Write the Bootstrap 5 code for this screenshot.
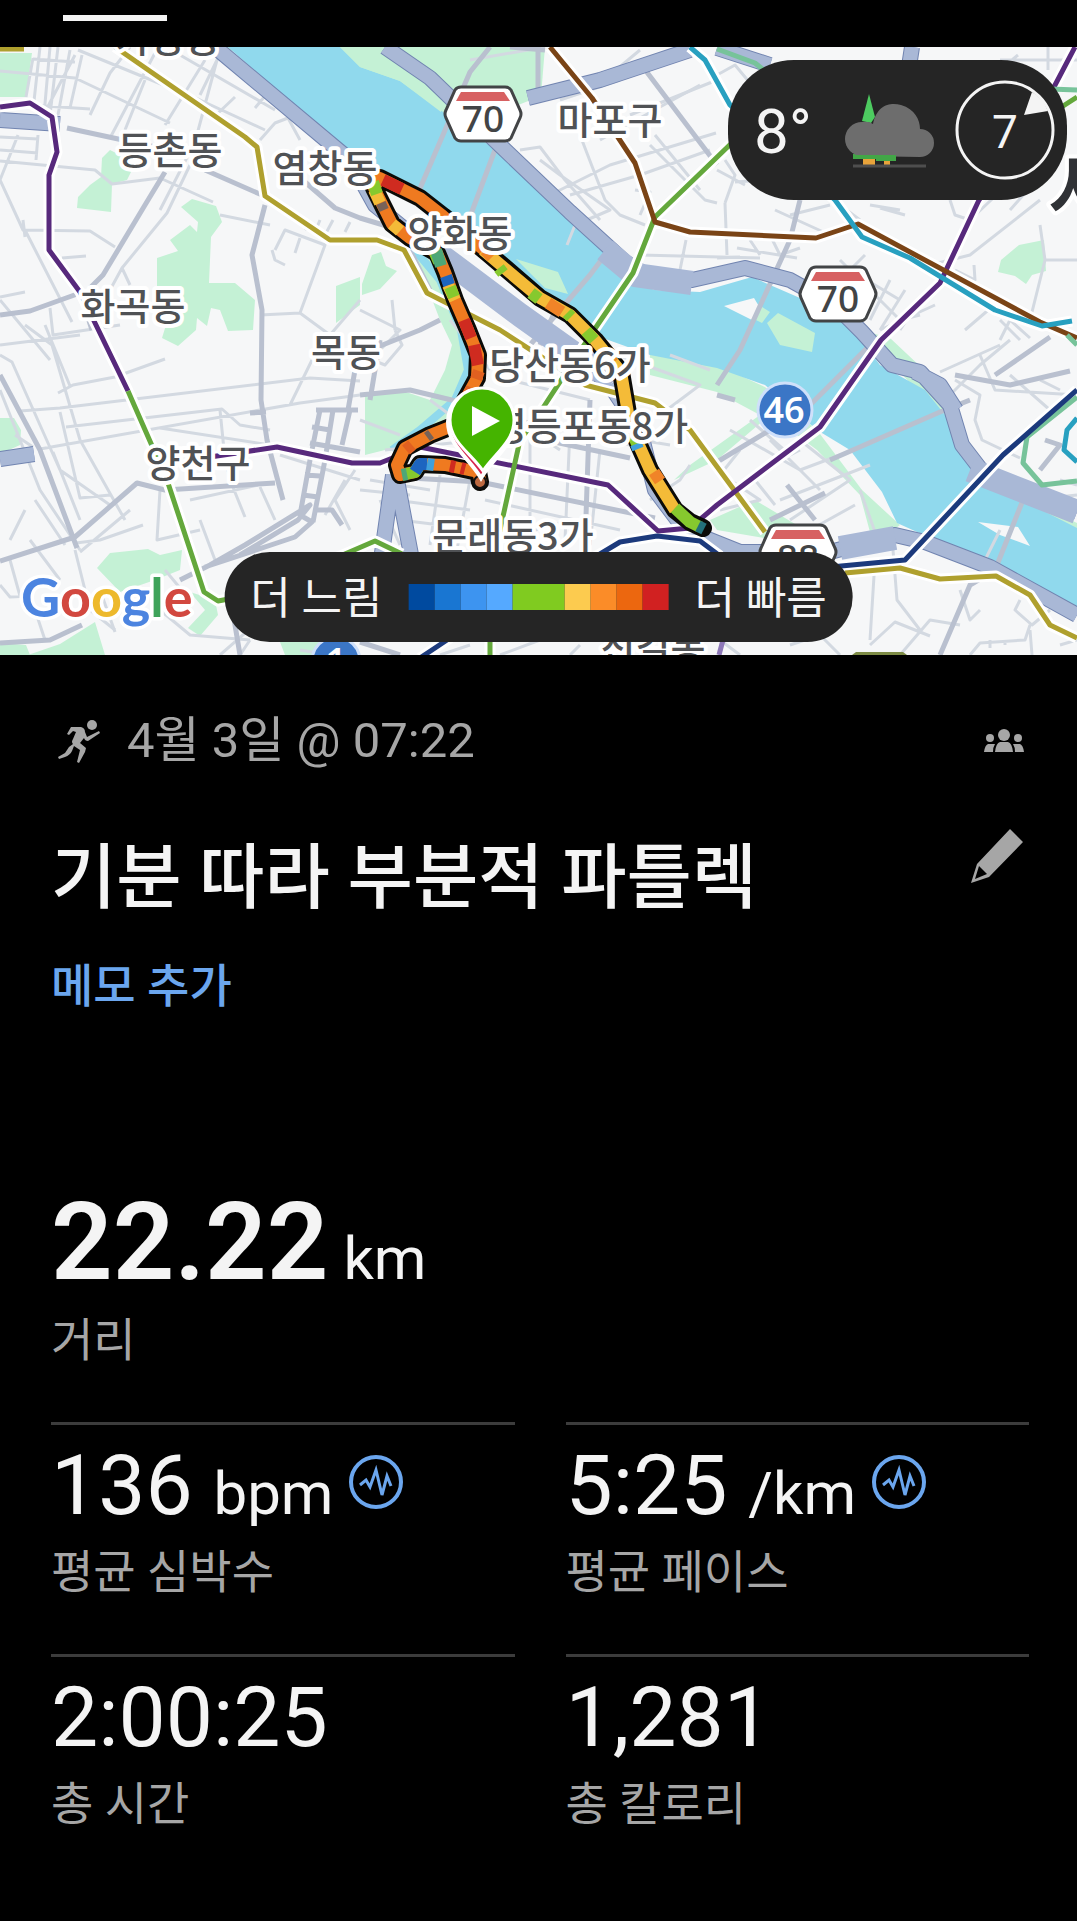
<!DOCTYPE html>
<html lang="ko" data-bs-theme="dark">
<head>
<meta charset="utf-8">
<meta name="viewport" content="width=device-width, initial-scale=1">
<title>기분 따라 부분적 파틀렉</title>
<link href="https://cdn.jsdelivr.net/npm/bootstrap@5.3.0/dist/css/bootstrap.min.css" rel="stylesheet">
<style>
  body { background: #000; color: #f4f4f4; font-family: Roboto, "Noto Sans CJK KR", sans-serif; }
  .tabs-bar { height: 47px; padding: 15px 63px 0; }
  .tab-line { width: 104px; height: 6px; background: #f4f4f4; }
  .map-art { display: block; width: 100%; height: auto; }
  .weather { top: 13px; right: 10px; width: 339px; height: 140px; border-radius: 66px; background: #252525; padding: 4px 12px 0 26px; }
  .temp { font-size: 62px; line-height: 70px; }
  .sky { margin-left: 12px; }
  .legend-bar { bottom: 13px; height: 90px; border-radius: 45px; background: #252525; padding: 4px 26px 0; gap: 26px; font-size: 44px; line-height: 60px; }
  .pace-scale { margin-bottom: 4px; }
  .pace-scale i { width: 26px; height: 26px; }
  .pace-scale .mid-pace { width: 52px; }
  .details { padding: 51px 48px 80px 51px; }
  .muted-text { color: #a6a6a6; }
  .date-row { height: 70px; font-size: 49px; line-height: 70px; }
  .run-title { font-size: 71px; line-height: 100px; font-weight: 500; margin: 0; color: #f4f4f4; }
  .title-row { margin-top: 52px; }
  .memo { display: inline-block; font-size: 46px; line-height: 60px; font-weight: 500; color: #6ba6ee; margin-top: 28px; }
  .distance { margin-top: 171px; margin-bottom: 52px; }
  .big-num { font-size: 108px; line-height: 110px; font-weight: 600; }
  .num { font-size: 84px; line-height: 90px; }
  .unit { font-size: 60px; line-height: 60px; font-weight: 400; }
  .stat-name { font-size: 46px; line-height: 60px; color: #a6a6a6; margin-top: 11px; }
  .distance .stat-name { margin-top: 13px; }
  .stat-grid { --bs-gutter-x: 51px; --bs-gutter-y: 52px; }
  .stat-box { border-top: 3px solid #3c3c3c; padding-top: 16px; }
  .icon-btn { background: none; border: 0; padding: 0; line-height: 0; }
  .places { font: 500 38px "Noto Sans CJK KR", sans-serif; fill: #505255; stroke: #fff; stroke-width: 8; stroke-linejoin: round; paint-order: stroke; text-anchor: middle; }
  .logo-text { font: 700 54px Lato, sans-serif; stroke: #fff; stroke-width: 7; stroke-linejoin: round; paint-order: stroke; }
  .shield-no { font: 500 37px "Noto Sans", "Open Sans", sans-serif; fill: #424446; text-anchor: middle; }
  .line { fill: none; stroke-linejoin: round; }
</style>
</head>
<body>
<header class="tabs-bar"><div class="tab-line"></div></header>

<section class="position-relative overflow-hidden" aria-label="지도">
<svg class="map-art" viewBox="0 47 1077 608" role="img" aria-label="달리기 경로">
  <rect y="47" width="1077" height="608" fill="#f6f7f8"/>
  <!-- parks -->
  <g fill="#c4f1d5">
    <path d="M0 53L32 53L26 97L0 97ZM110 150L120 155L131 172L127 180L112 184L111 212L77 208L78 197L90 185L101 177L102 158ZM192 199L216 206L222 222L211 237L209 283L235 283L255 300L253 330L228 331L220 310L211 308L207 326L197 318L196 330L178 346L162 338L166 325L157 320L157 258L178 251L170 240L190 225L197 232L198 222L181 207ZM336 286L360 277L360 305L336 323ZM0 418L14 418L21 430L20 445L0 454ZM97 568L110 553L148 549L160 555L182 550L180 570L155 580L120 592ZM190 592L215 600L218 615L200 636L188 628L205 610ZM28 655L60 644L95 622L105 655ZM0 643L26 645L30 655H0ZM280 642H320V655H285Z"/>
    <path d="M362 284L372 255L381 252L386 266L397 271L380 289L362 295ZM410 242L440 254L470 330L468 400L420 440L385 450L365 455V395L400 390L430 400L445 370L452 345L440 320Z"/>
    <path d="M1001 260L1019 245L1044 240L1046 271L1032 275L1026 284L1015 276L998 272ZM650 352L717 365L765 387L817 430L862 490L900 525L880 540L805 545L717 530L710 520L755 500L830 545L870 532L860 495L817 450L770 415L717 460L674 480L690 465L760 415L717 392L650 375Z"/>
    <path d="M220 47H545L541 96L500 112L440 112Z"/>
    <path d="M860 330L890 338L940 385L960 430L975 475L1077 523V530L1000 500L960 480L945 420Z"/>
  </g>
  <!-- Han river -->
  <path fill="#90d9ed" d="M228 47H340L360 67L400 81L443 112L500 153L560 205L607 255L630 282L655 290L700 292L752 277L800 298L850 325L880 365L925 390L957 430L966 460L990 484L1077 528V616L1020 590L935 540L897 523L882 492L850 450L817 430L765 385L717 368L650 355L600 337L540 300L490 250L440 215L375 178L345 150Z"/>
  <path class="line" stroke="#90d9ed" stroke-width="8" d="M415 250L440 280L461 330L468 370L455 400L420 430L392 450"/>
  <g fill="#c4f1d5"><path d="M340 47H410L443 85L441 112L400 81L360 67ZM516 259L558 272L568 294L545 288ZM767 323L778 313L815 333L812 352L780 345ZM759 305L770 312L762 323L752 318Z"/></g>
  <path fill="#f6f7f8" d="M724 306L754 298L760 308L752 320ZM978 522L1018 527L1030 546L1000 535Z"/>
  <!-- small streets -->
  <g class="line" stroke="#d3d9e1" stroke-width="3">
    <path d="M33 58L26 97M40 47L33 110M50 47L44 115M58 47L50 115M70 50L58 115M82 55L70 108M33 59L75 62M0 71L75 78L170 123M30 105L90 109M90 115L110 73L130 47M78 50L200 100L265 130M110 138L155 53M125 130L145 80M75 55L45 112M165 125L205 60M180 55L275 110M200 95L217 60L195 142L160 210M215 116L235 97M255 108L265 96M260 140L275 123L288 118L300 140M0 137L38 139M0 150L38 153M0 161L95 170L112 184L160 178L213 202M18 135L10 155L0 180M38 135L36 160M0 180L23 230L90 231L115 247M25 237L23 220M62 258L86 256M72 322L25 230M110 290L122 268L167 213L190 165M122 268L130 285M0 297L25 292M0 300L50 360M50 308L53 335L120 325M0 345L80 335M0 355L12 362L60 470L110 505M25 325L52 345L80 440L125 520M20 411L60 408L310 378L360 381M58 393L73 385L115 377L165 359M70 386L45 325M40 449L300 403L360 395M66 427L222 409L240 425L270 430M220 410L224 450L230 480L245 517M160 428L270 445M60 412L80 498L110 495M160 490L157 540L200 530M190 500L258 485M260 487L275 520M200 520L215 560M280 455L360 480M290 405L312 360M345 480L325 515M355 470L335 500L350 530M0 585L10 597L30 596M20 596L10 560M10 540L25 510M30 540L60 580M75 550L90 610L115 630M80 552L130 510M76 543L100 540L143 525M53 452L80 520M33 447L15 435M260 315L300 313L325 245L285 230L275 250M300 313L330 335L360 300M300 238L295 253M310 225L305 230M320 220L315 232M333 220L325 235M350 222L345 232M272 250L275 260L285 265M220 215L270 225"/>
    <path d="M0 390L40 490L80 550M35 500L65 545M100 590L115 632M160 610L190 635L250 640M165 570L190 600M250 640L240 655M220 655L260 620M35 610L45 640M360 310L400 330L360 370M392 300L395 330M430 400L470 430M385 450L480 440M370 480L430 490M395 500L470 510M440 475L430 545M470 480L455 560M400 520L440 525M510 380L590 400M500 410L560 450M520 420L630 445M530 440L530 530M570 430L565 540M600 450L590 545M485 500L620 530M550 390L540 430M590 345L700 385L660 415M670 355L710 370M640 440L670 445M500 540L570 520M540 160L560 175L610 210L575 225L567 245M580 135L605 200L620 215L645 225M520 150L540 147L565 180L600 220M570 195L640 175L710 150M600 140L700 85M550 195L610 165L716 133M655 135L700 190M635 190L650 192L640 215M686 240L680 270M640 255L760 258M650 145L705 200L717 203M725 203L735 175L725 160M735 182L765 180M725 203L727 255M717 258L740 257M737 248L797 258M750 240L760 255M770 235L780 255L800 248M775 210L830 235M790 215L830 205M840 205L860 220M870 205L900 210M905 215L880 208M950 200L955 215L970 220L1065 130M1010 210L1050 165M1040 225L1045 260L1030 320M1045 260H1077M930 265L970 255L1040 200M974 265L975 280L955 270M850 270L900 300M865 255L830 290M890 280L870 320M905 290L880 330M920 300L900 330M935 305L880 330M840 260L900 320L920 315M965 330L1000 300M1000 320L1020 340M1000 340L1010 320L1030 338"/>
    <path d="M950 395L980 365L1010 340M980 355L995 390L1077 395M940 372L1000 345M955 380L980 395L975 420L982 440L1020 458M1010 375L1050 410M1040 380L1060 390M730 430L800 470L840 455M750 420L790 455M770 440L820 490M740 450L720 475M760 470L800 450M780 500L870 465M790 520L850 480L800 440M810 530L855 505M730 480L760 500L720 510M755 480L775 505M860 490L875 532M875 560L870 640M893 550L897 600L920 630M870 645L895 622L930 636M900 655L930 620L960 625M960 590L970 620L980 610M970 655L980 643L1025 640L1030 625M1020 600L1015 610L1032 625L1050 610M1030 630L1032 655M1060 645L1077 640M1000 530L985 560M1030 500L1077 495M1060 480L1077 485M990 640V648M1005 640V645M720 640L740 655M790 645L820 635L840 655"/>
    <path d="M470 60L545 47M560 100L620 80M630 115L717 80M610 75L640 50M717 75L735 65L760 95M730 110L720 90M870 80L880 75M1000 60H1077M1048 47V70M1018 55L1000 70M717 170L745 185"/>
    <path d="M360 420L400 435M300 650L330 655M360 490L410 495M380 500L400 545M500 655L540 640M440 655L470 645M570 655L580 645M360 355L385 365L402 345L395 330M450 320L490 370M490 390L460 400M650 500L680 480L690 465"/>
  </g>
  <!-- main streets -->
  <g class="line" stroke="#b9c0cf" stroke-width="5">
    <path d="M67 128L160 148M205 170L262 195M265 205L252 255L262 310L261 400L267 440L283 500M165 172L145 205L103 275L90 288M0 315L30 311L80 293L92 330M0 375L40 450L77 548M0 561L75 537L137 483L165 490L275 483M305 182L335 208L360 218L400 230M0 643L50 640L82 625M180 580L210 565L245 545L310 505L298 520L240 555M320 410L310 460L300 515L312 522L295 537L205 567M333 410L325 460L313 522M316 410H358M312 427L330 430M310 443L360 452M350 410L342 445M305 475L320 476M303 495L318 497M316 510L332 510L342 525M230 595L240 655M355 370L348 410M250 413L266 412"/>
    <path d="M490 47L470 72L415 200M495 150L465 230M538 47V98M510 47L545 50M640 63L717 165M605 255L590 275L560 310L530 345M360 395L410 390L460 402M370 350L420 330L440 320M380 340L370 400M430 290L410 250M470 380L500 400L480 420M545 440L630 458M410 478L480 482L655 518M590 400L585 545M735 400L717 395M717 462L770 430M787 485L815 520M770 520L825 493M800 200L790 240L740 350L717 385M805 410L870 345M830 460L940 412M940 412L970 400M955 375L1010 385L1070 371M995 375L1050 337M1023 500L995 570L970 585L940 655M1040 470L1060 445L1045 440M717 560L760 570M360 642L400 655M560 300L540 345"/>
  </g>
  <!-- expressways -->
  <g class="line" stroke="#7184b0" stroke-width="16">
    <path d="M215 47L350 160L375 205L430 250L480 288L560 342L610 385M0 120L60 124M0 459L34 454M385 47L430 78L460 107L505 150L570 212L625 262L650 277L692 280L745 268L790 280L835 305L862 332L892 365L920 372L950 405L962 445L985 475L1077 512M528 98L600 80L690 50M915 372L940 385L956 410M393 475L381 560M396 475L412 560M900 125L912 47M717 48L770 65"/>
    <path d="M610 385L640 430L655 490L685 530L740 552L830 552L895 535L925 542L990 567L1077 615"/>
  </g>
  <g class="line" stroke="#a9b8d6" stroke-width="14">
    <path d="M215 47L350 160L375 205L430 250L480 288L560 342L610 385M0 120L60 124M0 459L34 454M385 47L430 78L460 107L505 150L570 212L625 262L650 277L692 280L745 268L790 280L835 305L862 332L892 365L920 372L950 405L962 445L985 475L1077 512M528 98L600 80L690 50M915 372L940 385L956 410M393 475L381 560M396 475L412 560M900 125L912 47M717 48L770 65"/>
    <path d="M610 385L640 430L655 490L685 530L740 552L830 552L895 535L925 542L990 567L1077 615"/>
    <path stroke-width="24" d="M440 255L520 315L600 372M605 250L635 275L692 283M840 548L895 538M970 470L1077 512"/>
  </g>
  <!-- metro lines -->
  <g class="line" stroke="#fff" stroke-width="11">
    <path d="M115 47L245 137L257 147L265 196L330 240H377L404 250L427 293L500 330L585 385L655 403L690 430L765 532M845 573L900 568L940 579L996 576L1030 595L1050 625L1077 638M0 107L30 103L52 117L57 152L49 175V250L80 292L128 391L167 480L204 592L218 601L250 595L375 541L402 554M210 457L277 447L352 463H380L420 447L608 485L658 531L690 528L717 505L820 427L881 340L940 283L979 200L1054 87L1075 47M740 135L655 217L633 273L592 333L535 420L520 440L500 530L490 600V655M550 47L592 98L635 163L655 222L690 232L816 238L858 224L1040 322L1077 338M690 47L705 60L730 105L835 200L862 237L910 258L995 310L1042 326L1072 321M1077 390L1003 455L905 560L820 568M590 560L620 542L657 536L700 541L720 556M420 658L450 638"/>
  </g>
  <g class="line" stroke-width="5">
    <path stroke="#afa02e" d="M0 49L24 49M115 47L245 137L257 147L265 196L330 240H377L404 250L427 293L500 330L585 385L655 403L690 430L765 532M845 573L900 568L940 579L996 576L1030 595L1050 625L1077 638"/>
    <path stroke="#57297c" d="M0 107L30 103L52 117L57 152L49 175V250L80 292L128 391M210 457L277 447L352 463H380L420 447L608 485L658 531L690 528L717 505L820 427L881 340L940 283L979 200L1054 87L1075 47"/>
    <path stroke="#64a83c" d="M128 391L167 480L204 592L218 601L250 595L375 541L402 554M740 135L655 217L633 273L592 333L535 420L520 440L500 530L490 600V655M1060 108L1077 97"/>
    <path stroke="#7a4416" d="M550 47L592 98L635 163L655 222L690 232L816 238L858 224L1040 322L1077 338"/>
    <path stroke="#28a0c0" d="M690 47L705 60L730 105L835 200L862 237L910 258L995 310L1042 326L1072 321M1077 418L1067 430L1064 450L1077 462"/>
    <path stroke="#77c39a" d="M717 49L755 63L770 75M1050 89L1077 90M1067 335L1077 345M1077 397L1027 437L1023 463L1042 485L1077 481"/>
    <path stroke="#1c3a7c" d="M1077 390L1003 455L905 560L820 568M590 560L620 542L657 536L700 541L720 556M420 658L450 638"/>
    <path stroke="#8d78b8" d="M719 655L723 640"/>
  </g>
  <path fill="#7d8b45" d="M852 655L856 652H903L907 655Z"/>
  <!-- tracked run, coloured by pace -->
  <g class="line" stroke-linecap="round">
    <path stroke="#0b0b08" stroke-width="18" d="M480 482L478 472L445 465L420 464L415 472L400 475L397 465L405 448L430 435L455 425L465 400L477 378L478 355L468 330L455 300L445 272L437 253L410 238L392 224L374 188L380 178L420 198L443 216L490 255L540 298L570 315L595 340L621 372L630 425L650 470L675 510L690 522L703 528"/>
    <g stroke-width="12" stroke-linecap="butt">
      <path stroke="#ef7a20" d="M481 483L478 472L445 465L420 464L415 472L400 475L397 465L405 448L430 435L455 425L465 400L477 378L478 355L468 330L455 300L445 272L437 253L410 238L392 224L374 188L380 178L420 198L443 216L490 255"/>
      <path stroke="#f4bb38" d="M483 250L540 298L570 315L595 340L621 372L630 425L650 470L675 510M400 231L392 224M448 285L455 300M374 190L380 203"/>
      <path stroke="#cf2b20" d="M383 180L402 189M464 320L471 338M474 345L478 365M450 466L455 467M461 468L465 469"/>
      <path stroke="#86c92e" d="M373 182L377 194M435 253L439 262M450 287L454 297M499 268L503 273M531 293L539 299M567 313L571 317M586 331L594 340M634 437L637 444M675 508L690 522L700 527M406 474L415 472L420 464"/>
      <path stroke="#4ea777" d="M436 250L441 266M402 475L407 474"/>
      <path stroke="#1d65c0" d="M446 276L449 285M415 472L420 464L427 464"/>
      <path stroke="#23707a" d="M698 526L704 529"/>
      <path stroke="#40a0dc" d="M427 464L434 465M636 444L638 449"/>
      <path stroke="#f08428" d="M548 303L562 312M654 472L660 481M609 358L613 363M485 250L492 257"/>
      <path stroke="#776258" d="M427 437L431 434M381 203L384 210" stroke-width="10"/>
      <path stroke="#e06020" d="M479 371L476 379M472 388L468 396M412 445L406 450"/>
    </g>
  </g>
  <circle cx="480" cy="482" r="6" fill="#bd6940" stroke="#111" stroke-width="2"/>
  <!-- place names -->
  <g class="places">
    <text x="168" y="52">가양동</text><text x="170" y="164">등촌동</text><text x="325" y="182">염창동</text>
    <text x="460" y="247">양화동</text><text x="610" y="134">마포구</text><text x="133" y="320">화곡동</text>
    <text x="346" y="366">목동</text><text x="570" y="379">당산동6가</text><text x="590" y="440">영등포동8가</text>
    <text x="198" y="477">양천구</text><text x="513" y="550">문래동3가</text><text x="653" y="662">신길동</text>
    <text x="1084" y="219" style="font-size:80px;fill:#303236">서</text>
  </g>
  <!-- road shields -->
  <defs>
    <g id="shield">
      <path d="M-22 -27H22Q26 -27 28 -24L37 -4Q39 0 37 4L28 24Q26 27 22 27H-22Q-26 27 -28 24L-37 4Q-39 0 -37 -4L-28 -24Q-26 -27 -22 -27Z" fill="#fff" stroke="#424446" stroke-width="3"/>
      <path d="M-22 -22H21L27 -13H-27Z" fill="#d76162"/>
    </g>
  </defs>
  <use href="#shield" x="483" y="114"/><text class="shield-no" x="483" y="132">70</text>
  <use href="#shield" x="838" y="294"/><text class="shield-no" x="838" y="312">70</text>
  <use href="#shield" x="798" y="552"/><text class="shield-no" x="798" y="571">88</text>
  <circle cx="785" cy="410" r="27" fill="#3b76c6" stroke="#cfe0fa" stroke-width="3"/>
  <text x="784" y="423" text-anchor="middle" fill="#fff" font-family="Noto Sans, sans-serif" font-weight="600" font-size="36">46</text>
  <circle cx="336" cy="661" r="24" fill="#3b76c6" stroke="#cfe0fa" stroke-width="3"/>
  <text x="336" y="674" text-anchor="middle" fill="#fff" font-family="Noto Sans, sans-serif" font-weight="600" font-size="36">1</text>
  <text class="logo-text" x="21" y="617"><tspan fill="#4c84e0">G</tspan><tspan fill="#d2483f">o</tspan><tspan fill="#edb92c">o</tspan><tspan fill="#4c84e0">g</tspan><tspan fill="#3fa35a">l</tspan><tspan fill="#d2483f">e</tspan></text>
  <!-- start pin -->
  <path d="M481 478C469 458 448 445 448 422A33 33 0 0 1 514 422C514 445 493 458 481 478Z" fill="#d6274f" stroke="#fff" stroke-width="4"/>
  <path d="M483 471C472 454 450 442 450 420A32 32 0 0 1 514 420C514 442 494 454 483 471Z" fill="#45b400" stroke="#fff" stroke-width="3"/>
  <path d="M472 406L500 421L472 436Z" fill="#fff"/>
</svg>

<div class="weather position-absolute d-flex align-items-center justify-content-between">
  <span class="temp">8°</span>
  <svg class="sky" width="90" height="76" viewBox="0 0 90 76" aria-hidden="true">
    <path d="M24 0L30 23L26 29L17 27Z" fill="#4dcb60"/>
    <path d="M8 60H51V67H31V65H8Z" fill="#42a647"/>
    <path d="M17 62A17 17 0 0 1 17 28Q24 27 28 30C32 10 46 8 56 11C70 15 75 26 75 35A14 14 0 0 1 75 63Z" fill="#6d6d6d"/>
    <path d="M8 61H51V67H31V65H8Z" fill="#42a647"/>
    <path d="M18 65H30V71H18ZM39 67H45V71H39Z" fill="#e8a33a"/>
    <path d="M8 72H81" stroke="#4e4e4e" stroke-width="3"/>
  </svg>
  <svg class="mb-1" width="100" height="100" viewBox="0 0 100 100" aria-label="바람 7">
    <circle cx="50" cy="50" r="48" fill="none" stroke="#f4f4f4" stroke-width="3"/>
    <path d="M77 12L69 35L93 31Q88 18 77 12Z" fill="#f4f4f4"/>
    <text x="50" y="68" text-anchor="middle" fill="#f4f4f4" font-size="46">7</text>
  </svg>
</div>

<div class="legend-bar position-absolute start-50 translate-middle-x d-flex align-items-center text-nowrap">
  <span>더 느림</span>
  <div class="pace-scale d-flex">
    <i style="background:#004a9f"></i><i style="background:#1976d2"></i><i style="background:#3d94f0"></i><i style="background:#55a9ff"></i><i class="mid-pace" style="background:#80cb20"></i><i style="background:#fccb4f"></i><i style="background:#fb8c28"></i><i style="background:#ec670f"></i><i style="background:#d12121"></i>
  </div>
  <span>더 빠름</span>
</div>
</section>

<main class="details">
  <div class="date-row d-flex align-items-center muted-text">
    <svg class="ms-1 me-4" width="48" height="44" viewBox="0 0 46 44" fill="#a6a6a6" aria-hidden="true">
      <circle cx="36" cy="6" r="5"/>
      <path d="M15 8L25 8Q29 9 29 13L31 18L43 12L44 14L32 22Q29 22 28 19L24 24L30 29L29 33L23 44L21 43L24 31L18 27L16 32Q14 36 9 38L3 40L2 38L9 34L13 28L17 25Q15 23 17 20L20 13L17 12L13 16L11 15Z"/>
    </svg>
    <span>4월 3일 @ 07:22</span>
    <svg class="ms-auto me-1" width="42" height="24" viewBox="0 0 42 24" fill="#a6a6a6" aria-label="공개">
      <circle cx="21" cy="6" r="6"/><circle cx="7" cy="9" r="4"/><circle cx="35" cy="9" r="4"/>
      <path d="M12 23Q13 14 17 13H25Q29 14 30 23ZM1 23Q2 16 5 15H12Q10 18 10 23ZM41 23Q40 16 37 15H30Q32 18 32 23Z"/>
    </svg>
  </div>

  <div class="title-row d-flex justify-content-between align-items-start">
    <h1 class="run-title">기분 따라 부분적 파틀렉</h1>
    <button class="icon-btn me-1" type="button" aria-label="이름 편집">
      <svg width="54" height="56" viewBox="0 0 54 56"><path fill="#a6a6a6" fill-rule="evenodd" d="M39 1L52 14L18 49L0 55L6 36ZM8 38L4 51L16 46Z"/></svg>
    </button>
  </div>
  <a class="memo text-decoration-none" href="#">메모 추가</a>

  <div class="distance">
    <div class="big-num">22.22<span class="unit"> km</span></div>
    <div class="stat-name">거리</div>
  </div>

  <div class="row stat-grid">
    <div class="col-6"><div class="stat-box">
      <div class="d-flex align-items-center gap-3"><div class="num">136 <span class="unit">bpm</span></div>
        <button class="icon-btn pb-2" type="button" aria-label="심박수 그래프"><svg width="54" height="54" viewBox="0 0 54 54" fill="none" stroke="#6ba6ee"><circle cx="27" cy="27" r="25" stroke-width="4"/><path d="M11 30L17 25L21 32L27 15L33 40L38 21L42 31" stroke-width="3"/></svg></button></div>
      <div class="stat-name">평균 심박수</div>
    </div></div>
    <div class="col-6"><div class="stat-box">
      <div class="d-flex align-items-center gap-3"><div class="num">5:25 <span class="unit">/km</span></div>
        <button class="icon-btn pb-2" type="button" aria-label="페이스 그래프"><svg width="54" height="54" viewBox="0 0 54 54" fill="none" stroke="#6ba6ee"><circle cx="27" cy="27" r="25" stroke-width="4"/><path d="M11 30L17 25L21 32L27 15L33 40L38 21L42 31" stroke-width="3"/></svg></button></div>
      <div class="stat-name">평균 페이스</div>
    </div></div>
    <div class="col-6"><div class="stat-box">
      <div class="num">2:00:25</div>
      <div class="stat-name">총 시간</div>
    </div></div>
    <div class="col-6"><div class="stat-box">
      <div class="num">1,281</div>
      <div class="stat-name">총 칼로리</div>
    </div></div>
  </div>
</main>
<script src="https://cdn.jsdelivr.net/npm/bootstrap@5.3.0/dist/js/bootstrap.bundle.min.js"></script>
</body>
</html>
